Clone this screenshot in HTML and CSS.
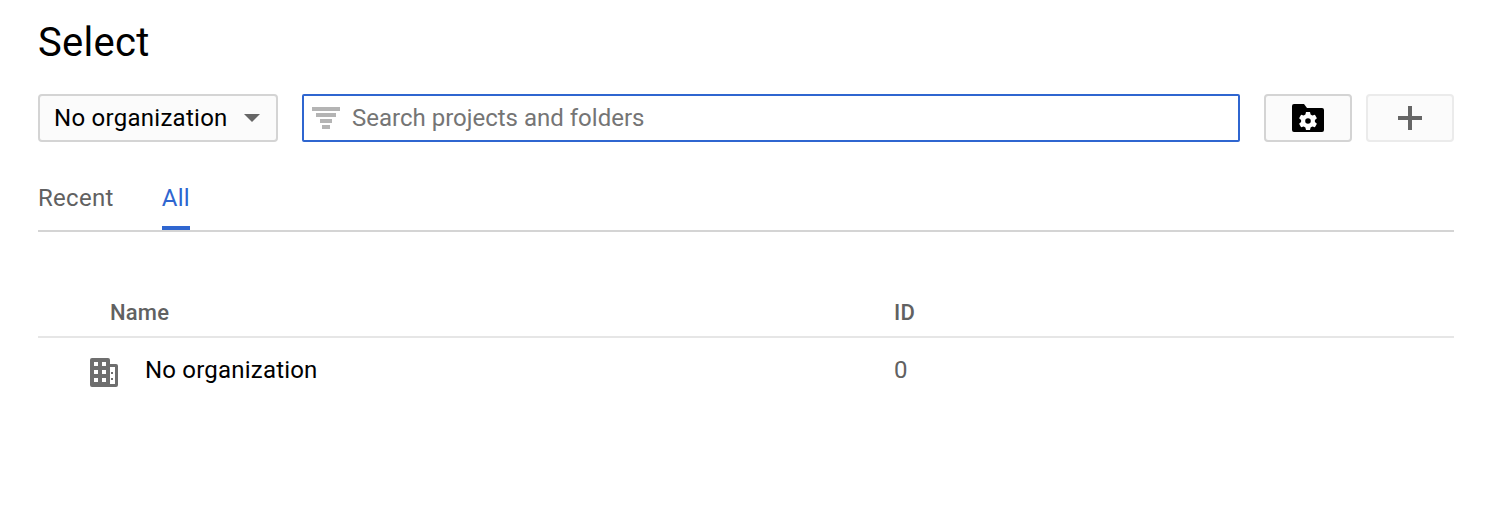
FILE: index.html
```html
<!DOCTYPE html>
<html lang="en">
<head>
    <meta charset="UTF-8">
    <title>Select</title>
    <link rel="stylesheet" href="styles.css">
</head>
<body>

    <!-- Title -->
    <h1 class="title">Select</h1>

    <!-- Toolbar -->
    <div class="toolbar">
        <button class="org-select">
            <span>No organization</span>
            <span class="caret"></span>
        </button>
        <div class="search">
            <svg class="filter-icon" width="28" height="22" viewBox="0 0 28 22">
                <path d="M0 0h28v4H0zM4 6h20v4H4zM8 12h12v4H8zM10 18h8v4h-8z" fill="#b4b4b4"/>
            </svg>
            <span class="search-text">Search projects and folders</span>
        </div>
        <div class="actions">
            <button class="icon-btn">
                <svg width="32" height="28" viewBox="0 0 32 28">
                    <path d="M2 0h10l3 4h15a2 2 0 0 1 2 2v20a2 2 0 0 1-2 2H2a2 2 0 0 1-2-2V2a2 2 0 0 1 2-2z" fill="#000"/>
                    <path fill="#fff" fill-rule="evenodd" d="M14 8h4l.6 2.600 1.700 1 2.600-.8 2 3.400-2 1.800v2l2 1.800-2 3.400-2.600-.8-1.700 1L18 26h-4l-.6-2.600-1.700-1-2.600.8-2-3.400 2-1.800v-2l-2-1.800 2-3.400 2.600.8 1.700-1zM16 14.200a2.800 2.800 0 1 0 0 5.600 2.800 2.800 0 0 0 0-5.600z"/>
                </svg>
            </button>
            <button class="icon-btn icon-btn-light">
                <svg width="24" height="24" viewBox="0 0 24 24">
                    <path d="M10 0h4v10h10v4H14v10h-4V14H0v-4h10z" fill="#666"/>
                </svg>
            </button>
        </div>
    </div>

    <!-- Tabs -->
    <div class="tabs">
        <a class="tab" href="#">Recent</a>
        <a class="tab tab-active" href="#">All</a>
    </div>

    <!-- Table -->
    <div class="table">
        <div class="row row-head">
            <div class="col-name">Name</div>
            <div class="col-id">ID</div>
        </div>
        <div class="row">
            <div class="col-name">
                <svg class="org-icon" width="28" height="29" viewBox="0 0 28 29">
                    <path fill="#6e6e6e" fill-rule="evenodd" d="M2 0h16a2 2 0 0 1 2 2v4h6a2 2 0 0 1 2 2v19a2 2 0 0 1-2 2H2a2 2 0 0 1-2-2V2a2 2 0 0 1 2-2zM4 4v4h4V4zM12 4v4h4V4zM4 12v4h4v-4zM12 12v4h4v-4zM4 20v4h4v-4zM12 20v4h4v-4zM20 9v17h5V9zM21 14h2v2h-2zM21 20h2v2h-2z"/>
                </svg>
                <span>No organization</span>
            </div>
            <div class="col-id id-value">0</div>
        </div>
    </div>

</body>
</html>
```

FILE: styles.css
```css
/* General Styles */
body {
    margin: 0;
    padding: 0 38px;
    font-family: 'Roboto', sans-serif;
    background-color: white;
    color: black;
}

.title {
    margin: 0;
    padding-top: 19px;
    font-size: 40px;
    line-height: 47px;
    font-weight: 400;
    letter-spacing: 0.3px;
}

/* Toolbar */
.toolbar {
    display: flex;
    margin-top: 28px;
    height: 48px;
}

button {
    font-family: inherit;
    background-color: #fbfbfb;
    border: 2px solid #d4d4d4;
    border-radius: 4px;
    padding: 0;
    box-sizing: border-box;
    height: 48px;
}

.org-select {
    width: 240px;
    display: flex;
    align-items: center;
    justify-content: space-between;
    padding: 0 16px 0 14px;
    font-size: 24px;
    letter-spacing: 0.27px;
    color: black;
}

.caret {
    width: 0;
    height: 0;
    border-left: 8px solid transparent;
    border-right: 8px solid transparent;
    border-top: 8px solid #666;
}

.search {
    flex: 1;
    margin: 0 24px;
    display: flex;
    align-items: center;
    box-sizing: border-box;
    border: 2px solid #2f66d0;
    border-radius: 2px;
    padding-left: 8px;
}

.filter-icon {
    margin-right: 12px;
}

.search-text {
    font-size: 24px;
    color: #757575;
}

.actions {
    display: flex;
    gap: 14px;
}

.icon-btn {
    width: 88px;
    display: flex;
    align-items: center;
    justify-content: center;
}

.icon-btn-light {
    border-color: #ebebeb;
}

/* Tabs */
.tabs {
    display: flex;
    gap: 48px;
    margin-top: 28px;
    height: 60px;
    border-bottom: 2px solid #d4d4d4;
}

.tab {
    font-size: 24px;
    line-height: 56px;
    height: 56px;
    color: #616161;
    text-decoration: none;
    letter-spacing: 0.3px;
}

.tab-active {
    color: #2f66d0;
    border-bottom: 4px solid #2f66d0;
}

/* Table */
.table {
    margin-top: 57px;
}

.row {
    display: flex;
    align-items: center;
    height: 64px;
    font-size: 24px;
    letter-spacing: 0.2px;
}

.row-head {
    height: 47px;
    font-size: 22px;
    font-weight: 500;
    color: #616161;
    border-bottom: 2px solid #e6e6e6;
}

.col-name {
    width: 856px;
    padding-left: 72px;
    box-sizing: border-box;
    display: flex;
    align-items: center;
}

.org-icon {
    margin: 4px 27px 0 -20px;
}

.id-value {
    color: #616161;
}
```
